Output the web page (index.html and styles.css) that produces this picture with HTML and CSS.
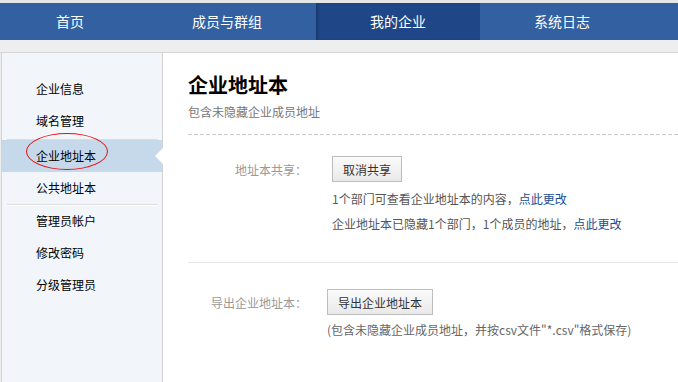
FILE: index.html
```html
<!DOCTYPE html>
<html lang="zh-CN">
<head>
<meta charset="utf-8">
<title>我的企业 - 企业地址本</title>
<link rel="stylesheet" href="styles.css">
</head>
<body>
<div class="topstrip"></div>
<nav class="nav">
  <a class="tab">首页</a>
  <a class="tab">成员与群组</a>
  <a class="tab tab-active">我的企业</a>
  <a class="tab">系统日志</a>
</nav>
<div class="gap"></div>
<div class="layout">
  <aside class="sidebar">
    <ul class="group group-first">
      <li class="item">企业信息</li>
      <li class="item">域名管理</li>
    </ul>
    <ul class="group">
      <li class="item item-active">企业地址本<span class="mark"></span></li>
      <li class="item">公共地址本</li>
    </ul>
    <ul class="group group-last">
      <li class="item">管理员帐户</li>
      <li class="item">修改密码</li>
      <li class="item">分级管理员</li>
    </ul>
  </aside>
  <main class="main">
    <h1 class="title">企业地址本</h1>
    <p class="subtitle">包含未隐藏企业成员地址</p>
    <section class="section section-share">
      <div class="row">
        <span class="label">地址本共享：</span>
        <button class="btn">取消共享</button>
      </div>
      <div class="info">
        <p><span class="num">1</span>个部门可查看企业地址本的内容，<a class="link">点此更改</a></p>
        <p>企业地址本已隐藏<span class="num">1</span>个部门，<span class="num">1</span>个成员的地址，<a class="link">点此更改</a></p>
      </div>
    </section>
    <section class="section section-export">
      <div class="row">
        <span class="label label-export">导出企业地址本：</span>
        <button class="btn">导出企业地址本</button>
      </div>
      <p class="note">(包含未隐藏企业成员地址，并按csv文件"*.csv"格式保存)</p>
    </section>
  </main>
</div>
</body>
</html>
```

FILE: styles.css
```css
* { box-sizing: border-box; }
html, body { margin: 0; padding: 0; }
body {
  font-family: "Noto Sans CJK SC", "Noto Sans", sans-serif;
  font-size: 12px;
  color: #333;
  background: #eeeeee;
  overflow: hidden;
}
ul, p, h1 { margin: 0; padding: 0; }
ul { list-style: none; }

.topstrip { height: 3px; background: #e6e6e6; }

.nav {
  display: flex;
  height: 37px;
  background: #3360a1;
  padding-left: 2px;
}
.tab {
  display: block;
  padding: 0 54px;
  line-height: 37px;
  font-size: 14px;
  color: #fff;
  white-space: nowrap;
}
.tab-active {
  background: #1f4787;
  box-shadow: inset 2px 0 2px rgba(0,0,0,0.18);
}

.gap {
  height: 13px;
  background: #eeeeee;
  border-bottom: 1px solid #d6d6d6;
}

.layout {
  display: flex;
  height: 329px;
  padding-left: 1px;
  background: #eeeeee;
}

.sidebar {
  width: 162px;
  flex: none;
  background: #f2f6fa;
  border-left: 1px solid #d3d3d3;
  border-right: 1px solid #d3d3d3;
}
.group {
  margin: 0 4px 0 5px;
  border-bottom: 1px solid #dcdcdc;
  box-shadow: 0 1px 0 #ffffff;
}
.group-first { padding: 20px 0 2px; }
.group-last { border-bottom: none; box-shadow: none; }
.item {
  height: 32px;
  line-height: 32px;
  padding-left: 29px;
  color: #000;
  font-size: 12px;
}
.item-active {
  position: relative;
  margin: 0 -4px 0 -5px;
  padding-left: 34px;
  background: #c6d9ea;
}
.item-active::after {
  content: "";
  position: absolute;
  right: -1px;
  top: 8px;
  border-top: 8px solid transparent;
  border-bottom: 8px solid transparent;
  border-right: 8px solid #ffffff;
}
.mark {
  position: absolute;
  left: 24px;
  top: -7px;
  width: 82px;
  height: 37px;
  border: 1px solid #e81010;
  border-radius: 50%;
}

.main {
  flex: 1;
  background: #ffffff;
  padding: 20px 0 0 25px;
}
.title {
  font-size: 20px;
  line-height: 24px;
  font-weight: bold;
  color: #000;
}
.subtitle {
  margin-top: 6px;
  line-height: 18px;
  color: #777;
}
.section-share {
  margin-top: 13px;
  padding: 22px 0 26px;
  background-image: repeating-linear-gradient(to right, #cccccc 0 4px, transparent 4px 6px);
  background-size: 100% 1px;
  background-repeat: no-repeat;
  background-position: 0 0;
  border-bottom: 1px solid #e6e6e6;
}
.section-export {
  padding-top: 26px;
}
.row {
  display: flex;
  align-items: center;
}
.label {
  width: 119px;
  margin-right: 25px;
  text-align: right;
  color: #999;
  white-space: nowrap;
}
.label-export { margin-right: 20px; }
.btn {
  height: 26px;
  padding: 0 10px;
  font-family: inherit;
  font-size: 12px;
  color: #333;
  border: 1px solid #bdbdbd;
  border-radius: 0;
  background: linear-gradient(#fbfbfb, #e9e9e9);
}
.info {
  margin-top: 4px;
  padding-left: 144px;
  line-height: 25px;
  color: #555;
}
.num { color: #5a5a5a; }
.link { color: #1a4d94; }
.note {
  margin-top: 6px;
  padding-left: 139px;
  line-height: 18px;
  color: #666;
  white-space: nowrap;
}
```
